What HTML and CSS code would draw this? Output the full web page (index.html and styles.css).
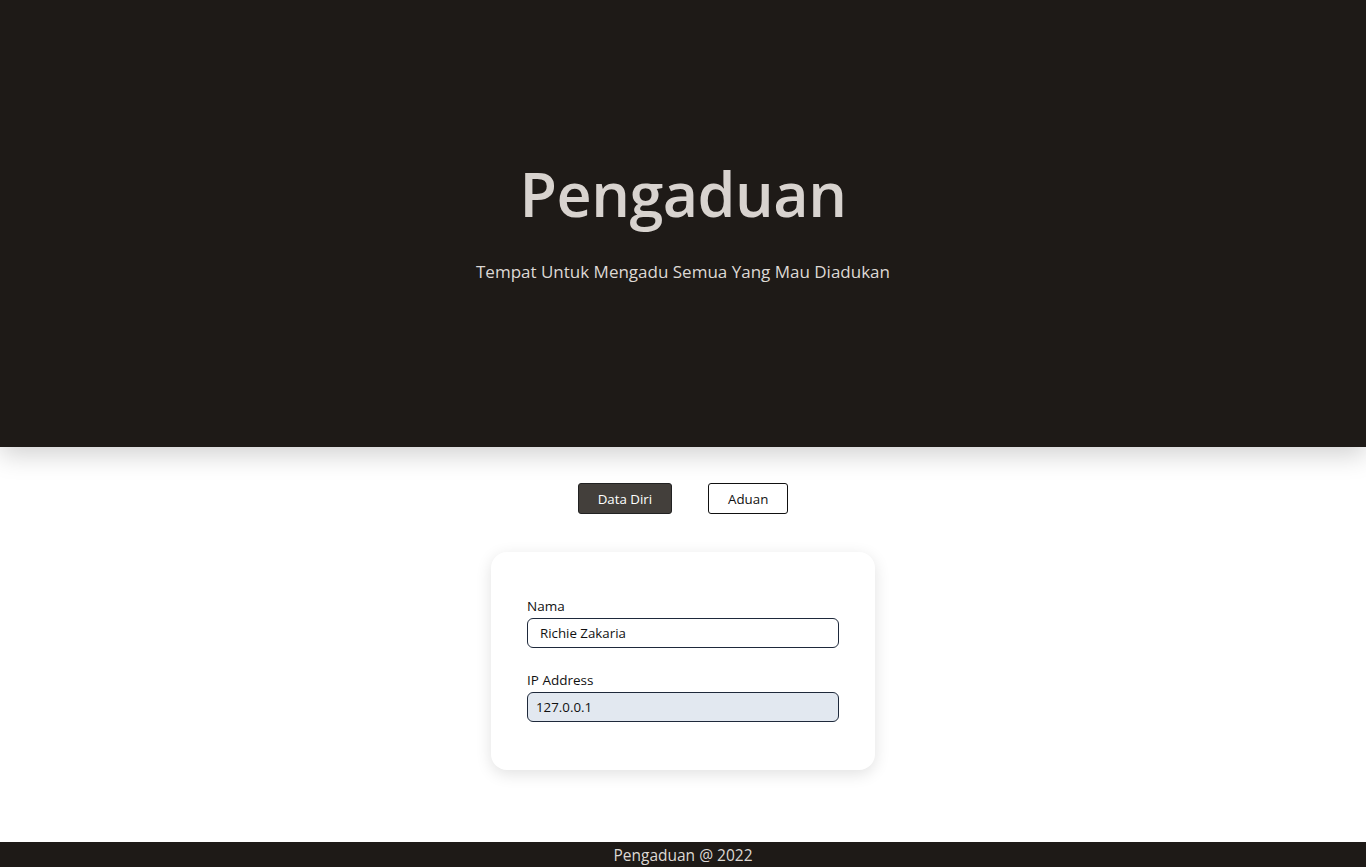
FILE: index.html
```html
<!DOCTYPE html>
<html lang="id">
<head>
<meta charset="utf-8">
<title>Pengaduan</title>
<link rel="stylesheet" href="styles.css">
</head>
<body>
<header class="hero">
  <h1 class="hero-title">Pengaduan</h1>
  <p class="hero-sub">Tempat Untuk Mengadu Semua Yang Mau Diadukan</p>
</header>
<main class="main">
  <nav class="tabs">
    <button class="tab tab-active">Data Diri</button>
    <button class="tab">Aduan</button>
  </nav>
  <section class="card">
    <div class="field">
      <label class="label">Nama</label>
      <input class="input" type="text" value="Richie Zakaria">
    </div>
    <div class="field">
      <label class="label">IP Address</label>
      <input class="input input-readonly" type="text" value="127.0.0.1" readonly>
    </div>
  </section>
</main>
<footer class="footer">Pengaduan @ 2022</footer>
</body>
</html>
```

FILE: styles.css
```css
* { box-sizing: border-box; }
html, body { margin: 0; padding: 0; }
body {
  font-family: "Open Sans", "Noto Sans", sans-serif;
  background: #fff;
  color: #111;
  min-height: 867px;
  display: flex;
  flex-direction: column;
}
.hero {
  height: 447px;
  background: #1e1a17;
  display: flex;
  flex-direction: column;
  align-items: center;
  padding-top: 150px;
  box-shadow: 0 8px 24px rgba(0,0,0,0.18);
  position: relative;
  z-index: 1;
}
.hero-title {
  margin: 0;
  font-size: 61px;
  font-weight: 600;
  color: #d8d3cf;
  line-height: 88px;
  letter-spacing: -0.5px;
}
.hero-sub {
  margin: 23px 0 0;
  font-size: 17px;
  color: #ddd8d4;
  line-height: 22px;
}
.main {
  flex: 1;
  display: flex;
  flex-direction: column;
  align-items: center;
  padding-top: 36px;
}
.tabs {
  display: flex;
  gap: 36px;
}
.tab {
  height: 31px;
  padding: 0 19px;
  font-family: inherit;
  font-size: 13.3px;
  background: #fff;
  color: #111;
  border: 1px solid #111;
  border-radius: 3px;
}
.tab-active {
  background: #433f3b;
  color: #fff;
  border-color: #222;
}
.card {
  margin-top: 38px;
  width: 384px;
  padding: 45px 36px 48px;
  background: #fff;
  border-radius: 16px;
  box-shadow: 0 4px 16px rgba(0,0,0,0.12);
  display: flex;
  flex-direction: column;
  gap: 23px;
}
.field { display: flex; flex-direction: column; }
.label {
  font-size: 13.5px;
  color: #111;
  line-height: 18px;
  margin-bottom: 3px;
}
.input {
  height: 30px;
  width: 100%;
  border: 1px solid #1e293b;
  border-radius: 6px;
  padding: 0 12px;
  font-family: inherit;
  font-size: 13.3px;
  color: #111;
  background: #fff;
  outline: none;
}
.input-readonly {
  background: #e2e8f0;
  padding: 0 8px;
}
.footer {
  height: 25px;
  background: #1e1a17;
  color: #ddd8d4;
  font-size: 15.5px;
  text-align: center;
  line-height: 27px;
}
```
